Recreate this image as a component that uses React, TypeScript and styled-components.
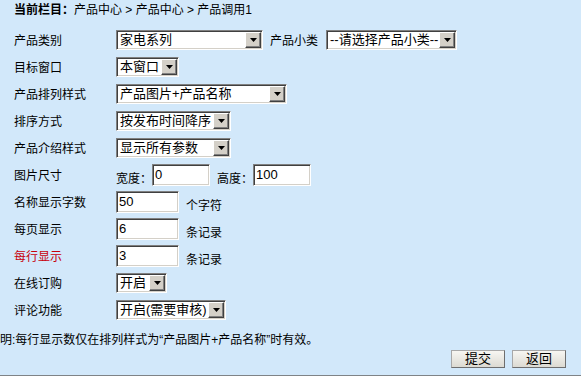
import React from "react";
import styled, { createGlobalStyle } from "styled-components";

const GlobalStyle = createGlobalStyle`
  html, body { margin: 0; padding: 0; background: #fff; }
  body {
    font-family: "Liberation Sans", "Noto Sans CJK SC", sans-serif;
    font-size: 12px;
    color: #000;
  }
`;

const Panel = styled.div`
  height: 376px;
  box-sizing: border-box;
  background: #d2e8fa;
  border-bottom: 1px solid #7f8386;
  overflow: hidden;
`;

const Title = styled.div`
  height: 20px;
  line-height: 20px;
  padding-left: 14px;
  white-space: nowrap;
  b { font-weight: bold; }
`;

const Form = styled.div`
  display: grid;
  grid-template-columns: 102px 1fr;
  grid-auto-rows: 27px;
  padding-left: 14px;
  margin-top: 6px;
`;

const Label = styled.div<{ $red?: boolean }>`
  display: flex;
  align-items: center;
  color: ${p => (p.$red ? "#c8000a" : "#000")};
`;

const Field = styled.div`
  display: flex;
  align-items: center;
  white-space: nowrap;
`;

const SelectBox = styled.div<{ $w: number; $ml?: number }>`
  width: ${p => p.$w}px;
  height: 20px;
  margin-left: ${p => p.$ml ?? 0}px;
  box-sizing: border-box;
  display: flex;
  align-items: center;
  background: #fff;
  border: 1px solid;
  border-color: #808080 #fff #fff #808080;
  box-shadow: inset 1px 1px 0 #404040, inset -1px -1px 0 #d4d0c8;
  padding: 1px;
`;

const SelectText = styled.span`
  flex: 1;
  padding-left: 2px;
  font-size: 13px;
  line-height: 16px;
  overflow: hidden;
`;

const ArrowBtn = styled.span`
  flex: none;
  width: 16px;
  height: 16px;
  box-sizing: border-box;
  display: flex;
  align-items: center;
  justify-content: center;
  background: #d4d0c8;
  border: 1px solid;
  border-color: #fff #404040 #404040 #fff;
  box-shadow: inset -1px -1px 0 #808080;
`;

const TextInput = styled.input<{ $w: number }>`
  width: ${p => p.$w}px;
  height: 22px;
  box-sizing: border-box;
  margin: 0;
  padding: 0 2px;
  font-family: "Liberation Sans", "Noto Sans CJK SC", sans-serif;
  font-size: 13px;
  background: #fff;
  border: 1px solid;
  border-color: #808080 #fff #fff #808080;
  box-shadow: inset 1px 1px 0 #404040, inset -1px -1px 0 #d4d0c8;
  outline: none;
`;

const Inline = styled.span<{ $ml?: number; $low?: boolean }>`
  margin-left: ${p => p.$ml ?? 0}px;
  padding-top: ${p => (p.$low ? 6 : 0)}px;
`;

const Note = styled.div`
  margin-top: 9px;
  line-height: 16px;
  white-space: nowrap;
`;

const ButtonBar = styled.div`
  display: flex;
  justify-content: flex-end;
  gap: 7px;
  padding-right: 15px;
  margin-top: 2px;
`;

const Button = styled.button`
  width: 54px;
  height: 18px;
  padding: 0;
  font-family: "Liberation Sans", "Noto Sans CJK SC", sans-serif;
  font-size: 13px;
  line-height: 14px;
  background: linear-gradient(#f7f6f2, #dcdad2);
  border: 1px solid;
  border-color: #a8a8a8 #6e6e6e #6e6e6e #a8a8a8;
  color: #000;
`;

const Select = ({ w, ml, text }: { w: number; ml?: number; text: string }) => (
  <SelectBox $w={w} $ml={ml}>
    <SelectText>{text}</SelectText>
    <ArrowBtn>
      <svg width="7" height="4" viewBox="0 0 7 4">
        <path d="M0 0h7L3.5 4z" fill="#000" />
      </svg>
    </ArrowBtn>
  </SelectBox>
);

export default function App() {
  return (
    <>
      <GlobalStyle />
      <Panel>
        <Title>
          <b>当前栏目：</b>产品中心 &gt; 产品中心 &gt; 产品调用1
        </Title>
        <Form>
          <Label>产品类别</Label>
          <Field>
            <Select w={147} text="家电系列" />
            <Inline $ml={7}>产品小类</Inline>
            <Select w={131} ml={8} text="--请选择产品小类--" />
          </Field>

          <Label>目标窗口</Label>
          <Field><Select w={63} text="本窗口" /></Field>

          <Label>产品排列样式</Label>
          <Field><Select w={171} text="产品图片+产品名称" /></Field>

          <Label>排序方式</Label>
          <Field><Select w={115} text="按发布时间降序" /></Field>

          <Label>产品介绍样式</Label>
          <Field><Select w={115} text="显示所有参数" /></Field>

          <Label>图片尺寸</Label>
          <Field>
            <Inline $low>宽度：</Inline>
            <TextInput $w={58} defaultValue="0" readOnly />
            <Inline $ml={7} $low>高度：</Inline>
            <TextInput $w={58} defaultValue="100" readOnly />
          </Field>

          <Label>名称显示字数</Label>
          <Field>
            <TextInput $w={63} defaultValue="50" readOnly />
            <Inline $ml={7} $low>个字符</Inline>
          </Field>

          <Label>每页显示</Label>
          <Field>
            <TextInput $w={63} defaultValue="6" readOnly />
            <Inline $ml={7} $low>条记录</Inline>
          </Field>

          <Label $red>每行显示</Label>
          <Field>
            <TextInput $w={63} defaultValue="3" readOnly />
            <Inline $ml={7} $low>条记录</Inline>
          </Field>

          <Label>在线订购</Label>
          <Field><Select w={51} text="开启" /></Field>

          <Label>评论功能</Label>
          <Field><Select w={110} text="开启(需要审核)" /></Field>
        </Form>
        <Note>明:每行显示数仅在排列样式为“产品图片+产品名称”时有效。</Note>
        <ButtonBar>
          <Button>提交</Button>
          <Button>返回</Button>
        </ButtonBar>
      </Panel>
    </>
  );
}
